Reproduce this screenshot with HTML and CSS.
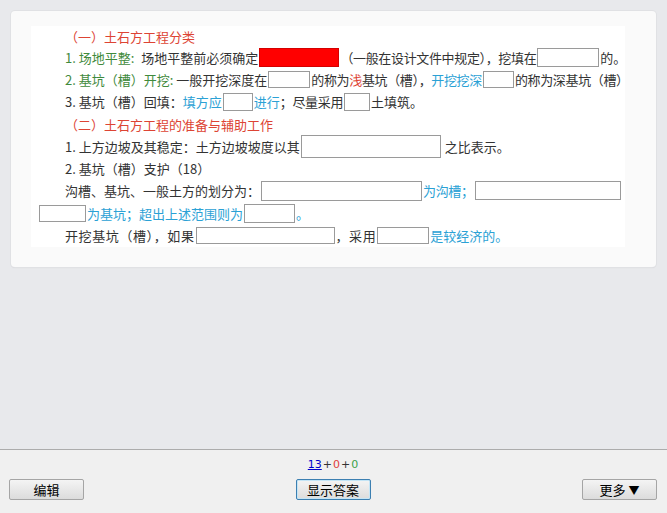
FILE: index.html
```html
<!DOCTYPE html>
<html lang="zh">
<head>
<meta charset="utf-8">
<title>土石方工程</title>
<link rel="stylesheet" href="styles.css">
</head>
<body>
<div class="app">
  <div class="content">
    <div class="card">
      <div class="doc">
        <div class="line first"><span class="red">（一）土石方工程分类</span></div>
        <div class="line"><span class="green">1. 场地平整:</span><span class="lead">场地平整前必须确定</span><span class="box filled" style="width:80px;height:19px"></span><span class="narrow">（一般在设计文件中规定），挖填在</span><span class="box" style="width:62px;height:19px"></span><span>的。</span></div>
        <div class="line"><span class="green">2. 基坑（槽）开挖:</span><span>&nbsp;一般开挖深度在</span><span class="box" style="width:42px;height:17px"></span><span class="narrow">的称为</span><span class="red narrow">浅</span><span class="narrow">基坑（槽），</span><span class="blue narrow">开挖挖深</span><span class="box" style="width:31px;height:17px"></span><span class="narrow">的称为深基坑（槽）</span></div>
        <div class="line"><span>3. 基坑（槽）回填：</span><span class="blue">填方应</span><span class="box" style="width:30px;height:18px"></span><span class="blue">进行</span><span class="narrow">；尽量采用</span><span class="box" style="width:26px;height:18px"></span><span>土填筑。</span></div>
        <div class="line"><span class="red">（二）土石方工程的准备与辅助工作</span></div>
        <div class="line"><span>1. 上方边坡及其稳定：土方边坡坡度以其</span><span class="box" style="width:140px;height:23px"></span><span>&nbsp;之比表示。</span></div>
        <div class="line"><span>2. 基坑（槽）支护（18）</span></div>
        <div class="line"><span>沟槽、基坑、一般土方的划分为：</span><span class="box" style="width:161px;height:20px"></span><span class="blue narrow">为沟槽；</span><span class="box" style="width:146px;height:19px"></span></div>
        <div class="line outdent"><span class="box" style="width:47px;height:17px"></span><span class="blue">为基坑；超出上述范围则为</span><span class="box" style="width:51px;height:19px"></span><span class="blue">。</span></div>
        <div class="line"><span class="wide">开挖基坑（槽），如果</span><span class="box" style="width:139px;height:17px"></span><span class="wide">，采用</span><span class="box" style="width:52px;height:17px"></span><span class="blue">是较经济的。</span></div>
      </div>
    </div>
  </div>
  <div class="bar">
    <div class="counter"><a class="cnt-link" href="#">13</a><span class="plus">+</span><span class="c-red">0</span><span class="plus">+</span><span class="c-green">0</span></div>
    <div class="buttons">
      <button class="btn">编辑</button>
      <button class="btn focus">显示答案</button>
      <button class="btn">更多 <span class="tri">▼</span></button>
    </div>
  </div>
</div>
</body>
</html>
```

FILE: styles.css
```css
* { box-sizing: border-box; }
html, body { margin: 0; padding: 0; }
body {
  background: #e8e9ec;
  font-family: "Noto Sans CJK SC", "Liberation Sans", sans-serif;
  width: 667px;
  height: 513px;
  overflow: hidden;
}
.app {
  display: flex;
  flex-direction: column;
  height: 513px;
}
.content {
  flex: 1;
  padding: 11px 11px 0 11px;
}
.card {
  background: #fafafa;
  border-radius: 4px;
  box-shadow: 0 0 0 1px #e0e1e4, 0 1px 1px #d4d5d8;
  padding: 15px 31px 20px 20px;
  height: 256px;
}
.doc {
  background: #ffffff;
  height: 221px;
  display: flex;
  flex-direction: column;
  font-size: 13px;
  color: #333333;
  padding-left: 34px;
}
.line {
  display: flex;
  align-items: center;
  height: 22.3px;
  white-space: nowrap;
}
.line.first { height: 20px; }
.line.outdent { margin-left: -27px; }
.lead { margin-left: 7px; }
.narrow { letter-spacing: -0.35px; }
.wide { letter-spacing: 0.6px; }
.red { color: #dd4434; }
.green { color: #3f8a3c; }
.blue { color: #2ba1d5; }
.box {
  display: inline-block;
  background: #ffffff;
  border: 1px solid #9a9a9a;
  margin: 0 1px;
  flex: none;
}
.box.filled {
  background: #ff0000;
  border-color: #d40000;
}

.bar {
  height: 64px;
  background: #f0f0f0;
  border-top: 1px solid #acacac;
  padding: 8px 10px 0 9px;
  display: flex;
  flex-direction: column;
}
.counter {
  text-align: center;
  font-family: "DejaVu Sans", "Liberation Sans", sans-serif;
  font-size: 11px;
  line-height: 14px;
  height: 14px;
  color: #333;
}
.cnt-link { color: #0000cc; text-decoration: underline; }
.plus { color: #333; margin: 0 1px; }
.c-red { color: #e03c3c; }
.c-green { color: #3aa24a; }
.buttons {
  margin-top: 7px;
  display: flex;
  justify-content: space-between;
}
.btn {
  width: 75px;
  height: 21px;
  padding: 0;
  font-family: "Noto Sans CJK SC", "Liberation Sans", sans-serif;
  font-size: 13px;
  line-height: 19px;
  color: #000;
  border: 1px solid #a5a5a5;
  border-radius: 2px;
  background: linear-gradient(#f4f4f4, #e8e8e8 50%, #dcdcdc);
}
.btn.focus {
  border-color: #3c7fb1;
  box-shadow: inset 0 0 0 1px #c4e5f6;
}
.tri { font-size: 11px; }
```
